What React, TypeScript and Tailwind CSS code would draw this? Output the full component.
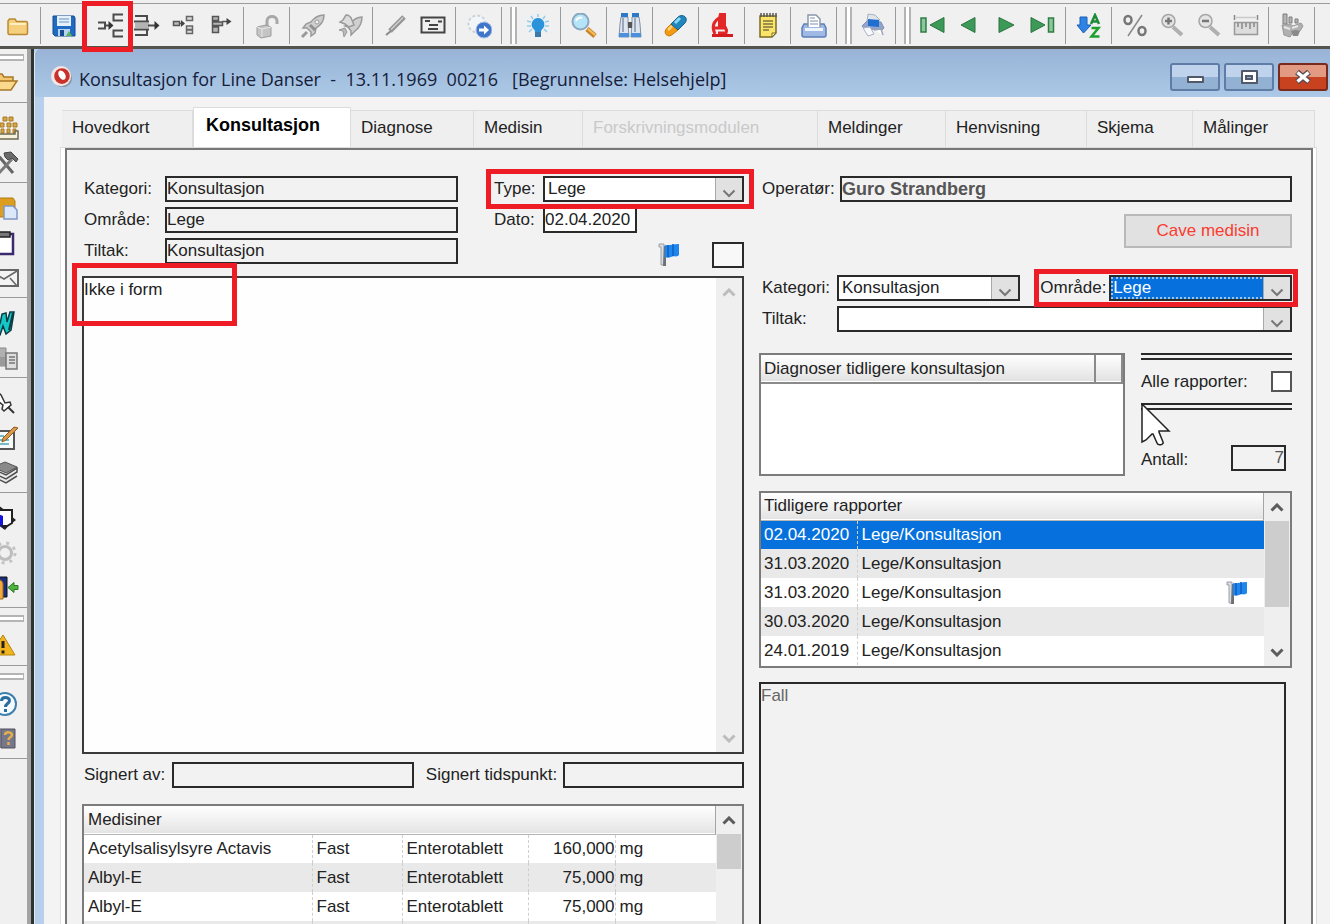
import React from "react";

type IconProps = { className?: string; children: React.ReactNode };

function Svg({ className = "", children }: IconProps) {
  return (
    <svg viewBox="0 0 26 26" className={"block h-[26px] w-[26px] shrink-0 " + className} fill="none" aria-hidden="true">
      {children}
    </svg>
  );
}

const icons: Record<string, React.ReactNode> = {
  folder: (
    <>
      <path d="M4 8l1.500-2H11l1.500 2.500H22c1 0 1.500.5 1.500 1.500v10c0 1-.5 1.500-1.500 1.500H5.500C4.500 21.500 4 21 4 20z" fill="#f6cf7c" stroke="#b98a35" strokeWidth="1.500" />
      <path d="M6 11h16" stroke="#fff0c4" strokeWidth="2" />
    </>
  ),
  save: (
    <>
      <path d="M2 3h21l1 2v18H4l-2-2z" fill="#1f6bc4" stroke="#174a92" />
      <path d="M6 3h14v10H6z" fill="#e6f0fb" />
      <path d="M8 6h10M8 9h10" stroke="#8fb4dd" strokeWidth="1.500" />
      <path d="M7 16h12v7H7z" fill="#b7d3ee" />
      <path d="M9 17h4v6H9z" fill="#174a92" />
      <path d="M18 18l3 5h-6z" fill="#5db35b" />
    </>
  ),
  splitIn: (
    <>
      <path d="M1 9.500h7v6H1M8 12.500h6" stroke="#4b4b4b" strokeWidth="2" />
      <path d="M11.500 8l5 4.500-5 4.500z" fill="#333" />
      <path d="M26 1.500H16.500v6H26M26 17.500H16.500v6H26" stroke="#4b4b4b" strokeWidth="2" />
    </>
  ),
  splitOut: (
    <>
      <path d="M1 3h12v5.500M1 22h12v-5.500M0 8.500h15M0 16.500h15" stroke="#4b4b4b" strokeWidth="2" />
      <path d="M1 10h14v5H1z" fill="#b4b4b4" />
      <path d="M14 12.500h8" stroke="#4b4b4b" strokeWidth="2" />
      <path d="M20.500 8l5 4.500-5 4.500z" fill="#333" />
    </>
  ),
  treeIn: (
    <>
      <path d="M2.500 8.500h6v4h-6zM8 10.500h5" fill="#bbb" stroke="#555" strokeWidth="1.500" />
      <path d="M10 7l4 3.500-4 3.500z" fill="#444" />
      <path d="M15.500 3.500h6v4h-6zM15.500 13h6v3.500h-6zM15.500 17h6v3.500h-6z" fill="#d9d9d9" stroke="#666" strokeWidth="1.500" />
    </>
  ),
  treeOut: (
    <>
      <path d="M4.500 3.500h6v4h-6zM4.500 9h10v3.500h-10zM4.500 14h6v5.500h-6z" fill="#b5b5b5" stroke="#555" strokeWidth="1.500" />
      <path d="M14 8.500h6" stroke="#555" strokeWidth="1.500" />
      <path d="M18.500 5l5 3.500-5 3.500z" fill="#444" />
    </>
  ),
  unlock: (
    <>
      <path d="M13 14V8c0-6 10-6 10 0v3" stroke="#a8a8a8" strokeWidth="3" />
      <path d="M3 14l9-2 5 2v9l-10 2-4-3z" fill="#c4c4c4" stroke="#9d9d9d" />
      <path d="M3 14l5 2v8M8 16l9-2" stroke="#e8e8e8" />
    </>
  ),
  rocket: (
    <>
      <path d="M24 2c-6 0-10 3-13 7l-5 2-3 4 4 0 4 4 0 4 4-3 1-5c5-3 8-7 8-13z" fill="#cfcfcf" stroke="#9a9a9a" strokeWidth="1.500" />
      <path d="M7 19l-5 5" stroke="#9a9a9a" strokeWidth="3" />
      <path d="M10 12l5 5" stroke="#8e8e8e" strokeWidth="3" />
      <circle cx="17" cy="9" r="2" fill="#f4f4f4" stroke="#9a9a9a" />
    </>
  ),
  rockets: (
    <>
      <path d="M25 4c-6 0-9 3-12 7l-5 2 3 1 3 4 0 4 4-4c4-3 7-7 7-14z" fill="#d0d0d0" stroke="#9a9a9a" strokeWidth="1.500" />
      <path d="M9 2c3 0 5 2 6 5l2 5-5 2-4-3-5-2 3-2z" fill="#dcdcdc" stroke="#9a9a9a" strokeWidth="1.500" />
      <path d="M8 15l-6 2 4 1 1 6 3-5z" fill="#bbb" stroke="#9a9a9a" />
    </>
  ),
  pencil: (
    <>
      <path d="M3 22l5-4" stroke="#8a8a8a" strokeWidth="2" />
      <path d="M7 18L21 4" stroke="#949494" strokeWidth="5" />
      <path d="M8 16.500L20 4.500" stroke="#d0d0d0" strokeWidth="1.500" />
    </>
  ),
  card: (
    <>
      <path d="M1.500 4.500h23v15h-23z" fill="#eee" stroke="#444" strokeWidth="2" />
      <path d="M5 8h5M9 12h9M8 16h10M18 8.500h4" stroke="#444" strokeWidth="2" />
    </>
  ),
  globeGo: (
    <>
      <circle cx="11" cy="11" r="8.500" fill="#f3f6f9" stroke="#cdd3d9" strokeWidth="2" strokeDasharray="3 2" />
      <circle cx="18" cy="17" r="8" fill="#3f76cc" stroke="#a9c0e2" />
      <path d="M13 17h6" stroke="#fff" strokeWidth="3" />
      <path d="M18 12.500l5 4.500-5 4.500z" fill="#fff" />
    </>
  ),
  bulb: (
    <>
      <path d="M13 5a6.500 6.500 0 0 0-4 11.500c1 1 1 2 1 3.500h6c0-1.500 0-2.500 1-3.500A6.500 6.500 0 0 0 13 5z" fill="#2b93da" />
      <path d="M10 19h6v5h-6z" fill="#3c78a8" />
      <path d="M13 1v3M6 3l2 3M20 3l-2 3M2 8l4 1M24 8l-4 1M2 13h4M24 13h-4M4 19l3-3M22 19l-3-3" stroke="#8fcdf0" strokeWidth="1.500" />
    </>
  ),
  search: (
    <>
      <path d="M16 16l8 7" stroke="#c9852a" strokeWidth="5" />
      <path d="M17 16l7 6" stroke="#f8c05c" strokeWidth="2" />
      <circle cx="9.500" cy="8.500" r="8" fill="#b5e3f8" stroke="#8ba7bf" strokeWidth="2" />
      <path d="M5 8c1-3 4-4 6-3" stroke="#fff" strokeWidth="2" />
    </>
  ),
  binoculars: (
    <>
      <path d="M4 4h7v7l1 13H2l1-13zM15 4h7l1 7 1 13H14l1-13z" fill="#dfe5ee" stroke="#8291a8" />
      <path d="M4 0h7v4H4zM15 0h7v4h-7z" fill="#2e78c8" />
      <path d="M11 9h4v6h-4z" fill="#555" />
      <path d="M2 20h10v4H2zM14 20h10v4H14z" fill="#4a90dc" />
      <path d="M6 5v14M18 5v14" stroke="#9aa6b8" strokeWidth="2" />
    </>
  ),
  pill: (
    <>
      <path d="M8 11L4 15c-5 5 1 11 6 6l5-4z" fill="#f49a12" stroke="#c67a0e" />
      <path d="M8 11l7-7c5-4 11 1 7 6l-7 7z" fill="#1f87bd" stroke="#1c5f8c" />
      <path d="M12 10l5-5" stroke="#8fd8f5" strokeWidth="3" />
      <path d="M5 17l4-4" stroke="#ffd27a" strokeWidth="2.500" />
    </>
  ),
  microscope: (
    <>
      <path d="M11 1h5v13h-6V5z" fill="#e32626" stroke="#e32626" strokeWidth="2" />
      <path d="M10 5c-6 4-7 10-4 16M5 15h13" stroke="#e32626" strokeWidth="3" />
      <path d="M15 14c3 2 3 4 2 6H9" stroke="#e32626" strokeWidth="3" />
      <path d="M3 21h21v3H3z" fill="#d41d1d" />
    </>
  ),
  notepad: (
    <>
      <path d="M5 3h16v17l-4 4H5z" fill="#fbe46a" stroke="#7a6b22" strokeWidth="1.500" />
      <path d="M6 0v4M9 0v4M12 0v4M15 0v4M18 0v4M21 0v4" stroke="#555" strokeWidth="1.500" />
      <path d="M8 8h10M8 11h10M8 14h10M8 17h6" stroke="#7d7440" strokeWidth="1.500" />
      <path d="M17 24v-4h4z" fill="#fff4b0" stroke="#7a6b22" />
    </>
  ),
  printTray: (
    <>
      <path d="M3 11h20l2 4v7c0 1-1 2-2 2H3c-1 0-2-1-2-2v-7z" fill="#9fb9e4" stroke="#5c7eb8" strokeWidth="1.500" />
      <path d="M7 14V2h8l4 4v8" fill="#fff" stroke="#8a97ad" strokeWidth="1.500" />
      <path d="M9 5h5M9 8h8M9 11h8" stroke="#8090ab" />
      <path d="M4 15h18v3H4z" fill="#eef4fd" />
    </>
  ),
  printer: (
    <>
      <path d="M7 8l1-7 7 1 5 5z" fill="#dfe3ea" stroke="#a9b2bf" />
      <path d="M2 13l5-5 14 1 3 6-4 4-7-3-6 3z" fill="#93a3cc" stroke="#8090b5" />
      <path d="M8 6l11 1v7L8 13z" fill="#1f6fd0" />
      <path d="M3 15l7-1 4 7-6 2z" fill="#f7f9fc" stroke="#aab4c4" />
      <path d="M14 17l7-1 2 6" fill="#fff" stroke="#9aa4b3" strokeWidth="1.500" />
    </>
  ),
  first: (
    <>
      <path d="M2 5h5v14H2z" fill="#8cc79b" stroke="#2f7d46" strokeWidth="1.500" />
      <path d="M25 4.500v15L11 12z" fill="#3d9957" stroke="#2a7540" />
    </>
  ),
  prev: <path d="M19 4.500v15L5 12z" fill="#3d9957" stroke="#2a7540" />,
  next: <path d="M6 4.500v15L21 12z" fill="#3d9957" stroke="#2a7540" />,
  last: (
    <>
      <path d="M1 4.500v15L15 12z" fill="#3d9957" stroke="#2a7540" />
      <path d="M18.500 5h5v14h-5z" fill="#8cc79b" stroke="#2f7d46" strokeWidth="1.500" />
    </>
  ),
  sort: (
    <>
      <path d="M4 4h7v8h4l-7.500 8L1 12h3z" fill="#2e83e6" stroke="#1b5fb4" />
      <path d="M15 11l4-9 4 9M17 8.500h4" stroke="#1f8a3a" strokeWidth="2.500" />
      <path d="M15.500 15h7l-7 8.500h8" stroke="#1fa02d" strokeWidth="2.500" />
    </>
  ),
  percent: (
    <>
      <ellipse cx="6" cy="7" rx="3.500" ry="4" stroke="#777" strokeWidth="2.500" />
      <ellipse cx="20" cy="18" rx="3.500" ry="4" stroke="#777" strokeWidth="2.500" />
      <path d="M20 2L6 23" stroke="#8a8a8a" strokeWidth="1.500" />
    </>
  ),
  zoomIn: (
    <>
      <path d="M14 14l9 8" stroke="#b0b0b0" strokeWidth="4" />
      <circle cx="9.500" cy="8" r="6.500" fill="#e4e4e4" stroke="#a6a6a6" strokeWidth="1.500" />
      <path d="M9.500 4.500v7M6 8h7" stroke="#777" strokeWidth="2.500" />
    </>
  ),
  zoomOut: (
    <>
      <path d="M14 14l9 8" stroke="#b0b0b0" strokeWidth="4" />
      <circle cx="9.500" cy="8" r="6.500" fill="#e4e4e4" stroke="#a6a6a6" strokeWidth="1.500" />
      <path d="M6 8h7" stroke="#777" strokeWidth="2.500" />
    </>
  ),
  ruler: (
    <>
      <path d="M1.500 2v5M24.500 2v5" stroke="#888" strokeWidth="1.500" />
      <path d="M3 4.500h20" stroke="#c9c9c9" strokeWidth="1.500" />
      <path d="M1.500 9.500h23v12h-23z" fill="#ddd" stroke="#999" strokeWidth="1.500" />
      <path d="M5 10v4M9 10v6M13 10v4M17 10v6M21 10v4" stroke="#888" strokeWidth="1.500" />
    </>
  ),
  lab: (
    <>
      <path d="M4 1h4v10H4zM10 4h3v6h-3zM16 6h3v4h-3z" fill="#b5b5b5" stroke="#7d7d7d" />
      <path d="M3 12l8-1 3 2 8-3 2 3-3 5-7 1-3 5-6-2z" fill="#b0b0b0" stroke="#999" />
      <path d="M12 18l5-1 4 1-2 5h-5z" fill="#8a8a8a" />
      <path d="M5 14l6 2M13 15l6-2" stroke="#e6e6e6" strokeWidth="2" />
    </>
  ),
  folderOpen: (
    <>
      <path d="M1 20V4h8l2 3h9v4" fill="#f3c670" stroke="#a87824" strokeWidth="1.500" />
      <path d="M1 20l6-9h17l-6 9z" fill="#fbd98c" stroke="#a87824" strokeWidth="1.500" />
    </>
  ),
  network: (
    <>
      <path d="M10 2h4v4h-4zM16 2h4v4h-4zM7 8h4v4H7zM14 8h4v4h-4zM20 8h4v4h-4zM8 14h3v4H8zM14 14h3v4h-3zM20 14h3v4h-3z" fill="#d8a544" stroke="#a97b25" />
      <path d="M0 19h22v-3h3v8H0z" fill="#f6f2dd" stroke="#6e6a4f" strokeWidth="1.500" />
    </>
  ),
  hammer: (
    <>
      <path d="M4 4l16 19" stroke="#666" strokeWidth="3" />
      <path d="M19 9L6 23" stroke="#7a7a7a" strokeWidth="3" />
      <path d="M11 3l7-1 7 7-2 3-4-4-4 2-3-3z" fill="#6a6a6a" stroke="#444" />
    </>
  ),
  docFolder: (
    <>
      <path d="M-2 3h22l2 3v16H-2z" fill="#dd9d1e" stroke="#b57c10" />
      <path d="M11 11h9l4 4v9H11z" fill="#dce8fa" stroke="#7f97c4" strokeWidth="1.500" />
    </>
  ),
  clipboard: (
    <>
      <path d="M0 4h20v20H0z" fill="#fff" stroke="#3a2a6e" strokeWidth="2.500" />
      <path d="M4 2h13v5H4z" fill="#777" stroke="#222" strokeWidth="1.500" />
    </>
  ),
  envelope: (
    <>
      <path d="M-2 5h27v16H-2z" fill="#f3f3f3" stroke="#666" strokeWidth="2" />
      <path d="M-2 6l13 8 13-8M7 13l-8 8M17 13l7 8" stroke="#666" strokeWidth="1.500" />
    </>
  ),
  word: (
    <>
      <path d="M-1 6l5-2 3 10 2-10 4-1 1 9 3-10 4 0-3 18-5 4-3-8-3 9-5 1z" fill="#14c8c8" stroke="#0b3c44" strokeWidth="1.500" />
      <path d="M20 3l-4 17" stroke="#0b3c44" strokeWidth="2" />
    </>
  ),
  office: (
    <>
      <path d="M3 3h10v18H3z" fill="#b0b0b0" stroke="#8a8a8a" />
      <path d="M0 12h13v9H0z" fill="#9a9a9a" />
      <path d="M13 8h11v16H13z" fill="#dedede" stroke="#777" strokeWidth="1.500" />
      <path d="M16 12h6M16 15h6M16 18h6" stroke="#777" strokeWidth="1.500" />
    </>
  ),
  pin: (
    <>
      <path d="M4 1l4 4 4 8 5-1 1 3-7 6-2-2 1-4-8-6" fill="#fff" stroke="#333" strokeWidth="1.500" />
      <path d="M15 17l6 6" stroke="#333" strokeWidth="2" />
    </>
  ),
  editNote: (
    <>
      <path d="M1 6h20v18H1z" fill="#f7fbfb" stroke="#555" strokeWidth="2" />
      <path d="M4 11h7M4 15h12M4 19h12" stroke="#49a6b4" strokeWidth="1.500" />
      <path d="M10 13L21 2l4 1-12 12-4 2z" fill="#d99a4e" stroke="#8e5a1c" />
    </>
  ),
  books: (
    <>
      <path d="M0 7l12-5 12 5-11 6z" fill="#8a8a8a" stroke="#555" />
      <path d="M0 9l13 6 11-7v4l-11 7-13-6zM1 17l12 6 11-7" fill="#e8e8e8" stroke="#4e4e4e" strokeWidth="1.500" />
    </>
  ),
  door: (
    <>
      <path d="M2 5h17v13l-8 5-7-5" fill="#fff" stroke="#222" strokeWidth="2" />
      <path d="M0 7l10 4v12l-10-6z" fill="#1414e0" />
      <path d="M5 0l6 4.500-6 1zM18 11l5 4-5 4zM7 20h9l-4 5z" fill="#222" />
    </>
  ),
  gear: (
    <>
      <circle cx="12" cy="13" r="6.500" stroke="#bdbdbd" strokeWidth="3" />
      <circle cx="12" cy="13" r="10" stroke="#c4c4c4" strokeWidth="3" strokeDasharray="3 5" />
    </>
  ),
  exit: (
    <>
      <path d="M-2 2h16v20H-2z" fill="#1a2c7c" stroke="#111" />
      <path d="M-2 6c7-3 12-1 12 3v15H-2z" fill="#f2ab3a" stroke="#9c661a" />
      <path d="M6 8v14" stroke="#fce0a8" strokeWidth="2" />
      <path d="M15 12.500l6-5v3h4v4h-4v3z" fill="#4eb23e" stroke="#2d7a25" />
    </>
  ),
  warning: (
    <>
      <path d="M10 2l12 20H-3z" fill="#f2b51d" stroke="#b58410" />
      <path d="M10 8v7M10 17.500v3" stroke="#222" strokeWidth="3" />
    </>
  ),
  help: (
    <>
      <circle cx="12" cy="13" r="11" fill="#f5fafe" stroke="#3d7fae" strokeWidth="2" />
      <path d="M8.500 10c0-5 8-4.500 8-.5 0 3-4 3-4 6.500M12.500 18v3" stroke="#2a6c9e" strokeWidth="3" />
    </>
  ),
  helpBook: (
    <>
      <path d="M0 5l7-3v20l-7 2zM8 3h14v19H8z" fill="#77778c" stroke="#50505f" />
      <path d="M12 9c0-4 7-3 7 0 0 2-3.500 2-3.500 5M15.500 16v3" stroke="#e3b04a" strokeWidth="2.500" />
    </>
  ),
  flag: (
    <>
      <path d="M3 2h5v21H5V5H3z" fill="#d9dcdf" stroke="#9aa0a6" />
      <path d="M8 4h2v20H7z" fill="#6b7177" />
      <path d="M9 3c4 1 7-1 14-1v11c-3 3-5 0-8 2-2 1-4 1-6 0z" fill="#1f86ee" />
      <path d="M12 3v12M17 2v12" stroke="#0f5fc0" strokeWidth="1.500" />
    </>
  ),
};

function IconButton({ name, label, marked }: { name: string; label: string; marked?: boolean }) {
  return (
    <button type="button" aria-label={label} className="relative block shrink-0">
      <Svg>{icons[name]}</Svg>
      {marked && <span className="pointer-events-none absolute -top-3 -right-[10px] -bottom-[13px] -left-[15px] z-20 border-[5px] border-[#ee1c25]" />}
    </button>
  );
}

type Tool = [string, string];

const toolGroups: (Tool[] | "grip")[] = [
  [["save", "Lagre"]],
  [["splitIn", "Flett inn"], ["splitOut", "Flett ut"], ["treeIn", "Legg til"], ["treeOut", "Trekk fra"]],
  [["unlock", "Lås opp"]],
  [["rocket", "Send"], ["rockets", "Send alle"]],
  [["pencil", "Rediger"], ["card", "Kort"]],
  [["globeGo", "Gå til"]],
  "grip",
  [["bulb", "Tips"]],
  [["search", "Søk"]],
  [["binoculars", "Finn"]],
  [["pill", "Medisin"]],
  [["microscope", "Laboratorium"]],
  [["notepad", "Notat"]],
  [["printTray", "Skriv ut"]],
  "grip",
  [["printer", "Skriver"]],
  "grip",
  [["first", "Første"], ["prev", "Forrige"], ["next", "Neste"], ["last", "Siste"]],
  [["sort", "Sorter"]],
  [["percent", "Prosent"], ["zoomIn", "Zoom inn"], ["zoomOut", "Zoom ut"], ["ruler", "Linjal"]],
  [["lab", "Prøver"]],
];

function Toolbar() {
  return (
    <header className="flex h-[49px] shrink-0 flex-col border-b-[3px] border-[#55534e] bg-[#f0f0f0] pt-[3px]">
      <div className="flex flex-1 items-stretch border-t border-[#9c9c9c] pt-[3px] pb-[2px]">
        <div className="flex items-center border-r border-[#9a9a9a] pr-[10px] pl-1">
          <IconButton name="folder" label="Mappe" />
        </div>
        {toolGroups.map((group, i) =>
          group === "grip" ? (
            <div key={i} className="ml-2 w-[7px] border-x-2 border-[#b4b4b4] bg-white" />
          ) : (
            <div
              key={i}
              className={"flex items-center gap-[11px] border-r border-[#9a9a9a] pr-[9px] " + (toolGroups[i - 1] === "grip" ? "pl-2" : "pl-[10px]")}
            >
              {group.map(([name, label]) => (
                <IconButton key={name} name={name} label={label} marked={name === "splitIn"} />
              ))}
            </div>
          ),
        )}
      </div>
    </header>
  );
}

const sideSections: (Tool[] | "grip")[] = [
  "grip",
  [["folderOpen", "Åpne"]],
  [["network", "Oversikt"], ["hammer", "Verktøy"]],
  [["docFolder", "Dokumenter"], ["clipboard", "Utklipp"], ["envelope", "Post"]],
  [["word", "Tekst"], ["office", "Kontor"]],
  [["pin", "Fest"], ["editNote", "Skriv notat"], ["books", "Bøker"]],
  [["door", "Inngang"], ["gear", "Innstillinger"], ["exit", "Avslutt"]],
  "grip",
  [["warning", "Varsel"]],
  "grip",
  [["help", "Hjelp"], ["helpBook", "Håndbok"]],
];

function Sidebar() {
  return (
    <nav aria-label="Verktøy" className="w-[31px] shrink-0 overflow-hidden border-r-[4px] border-[#a3a3a1] bg-[#f0f0f0]">
      {sideSections.map((section, i) =>
        section === "grip" ? (
          <div key={i} className={"flex items-center pr-[3px] " + (i === 0 ? "h-4" : "h-5")}>
            <div className="h-[7px] w-full border-y-2 border-r border-[#b4b4b4] bg-white" />
          </div>
        ) : (
          <div
            key={i}
            className={"flex flex-col border-b border-[#9a9a9a] pb-[2px] " + (sideSections[i - 1] === "grip" ? "" : "pt-[7px]")}
          >
            {section.map(([name, label]) => (
              <button key={name} type="button" aria-label={label} className="flex h-[35px] items-center justify-end pr-2">
                <Svg>{icons[name]}</Svg>
              </button>
            ))}
          </div>
        ),
      )}
    </nav>
  );
}

function TitleBar() {
  const frame = "flex h-7 w-[50px] items-center justify-center rounded-[3px] border-2";
  return (
    <div className="flex h-12 shrink-0 items-center bg-linear-to-b from-[#98b3d6] to-[#acc9e7] pt-2 pr-[2px] pl-4">
      <svg viewBox="0 0 24 24" className="mr-[6px] h-[22px] w-[22px]" aria-hidden="true">
        <circle cx="13" cy="13" r="10" fill="#8b95a5" />
        <circle cx="11" cy="11" r="11" fill="#f3e6e4" />
        <circle cx="12" cy="11" r="8.500" fill="#c8322b" />
        <ellipse cx="12" cy="10" rx="3.500" ry="5.500" fill="#fff" transform="rotate(-30 12 10)" />
      </svg>
      <h1 className="flex-1 pt-1 font-['Open_Sans','Noto_Sans',sans-serif] text-[18px] whitespace-pre text-[#14203a]">
        Konsultasjon for Line Danser  -  13.11.1969  00216   [Begrunnelse: Helsehjelp]
      </h1>
      <div className="flex gap-1">
        <button type="button" aria-label="Minimer" className={frame + " border-[#5f7ca6] bg-linear-to-b from-[#bfd4ec] from-50% to-[#93b1d3] to-50%"}>
          <span className="mt-1 h-[7px] w-[17px] rounded-[1px] border-2 border-[#50586a] bg-white" />
        </button>
        <button type="button" aria-label="Maksimer" className={frame + " border-[#5f7ca6] bg-linear-to-b from-[#bfd4ec] from-50% to-[#93b1d3] to-50%"}>
          <span className="flex h-[14px] w-[17px] items-center justify-center rounded-[1px] border-2 border-[#50586a] bg-white">
            <span className="h-[5px] w-2 border-2 border-[#50586a] bg-[#93b1d3]" />
          </span>
        </button>
        <button type="button" aria-label="Lukk" className={frame + " border-[#7a2a1c] bg-linear-to-b from-[#e39a82] from-50% to-[#c9421f] to-50%"}>
          <svg viewBox="0 0 18 14" className="h-[14px] w-[18px]" aria-hidden="true">
            <path d="M3 2l12 10M15 2L3 12" stroke="#5b4b52" strokeWidth="6" />
            <path d="M3.500 2.500l11 9M14.500 2.500l-11 9" stroke="#fff" strokeWidth="3.500" />
          </svg>
        </button>
      </div>
    </div>
  );
}

const tabs = ["Hovedkort", "Konsultasjon", "Diagnose", "Medisin", "Forskrivningsmodulen", "Meldinger", "Henvisning", "Skjema", "Målinger"];

function Tabs() {
  return (
    <div role="tablist" className="mr-[15px] ml-[18px] grid h-[40px] shrink-0 grid-cols-[131fr_158fr_123fr_109fr_235fr_128fr_141fr_106fr_122fr] items-end">
      {tabs.map((tab) => {
        if (tab === "Konsultasjon")
          return (
            <button key={tab} type="button" role="tab" aria-selected="true" className="flex h-full items-center border border-b-0 border-[#dcdcdc] bg-white pb-[6px] pl-3 text-[18px] font-bold text-black">
              {tab}
            </button>
          );
        const off = tab === "Forskrivningsmodulen";
        return (
          <button
            key={tab}
            type="button"
            role="tab"
            aria-selected="false"
            disabled={off}
            className={"flex h-[37px] items-center border-t border-r border-[#dcdcdc] bg-[#efefef] pb-[2px] pl-[10px] " + (off ? "text-[#c9c9c9]" : "")}
          >
            {tab}
          </button>
        );
      })}
    </div>
  );
}

const box = "h-[26px] min-w-0 rounded-none border-2 border-[#2a2a2a] outline-none";

function Chevron({ up, bold }: { up?: boolean; bold?: boolean }) {
  return (
    <svg viewBox="0 0 14 9" className="h-[9px] w-[14px]" fill="none" aria-hidden="true">
      <path d={up ? "M1.500 7.500L7 2l5.500 5.500" : "M1.500 1.500L7 7l5.500-5.500"} stroke="currentColor" strokeWidth={bold ? 3 : 2} />
    </svg>
  );
}

function Select({ id, value, focused, className = "" }: { id: string; value: string; focused?: boolean; className?: string }) {
  return (
    <div className={box + " relative flex bg-white " + className}>
      <select
        id={id}
        defaultValue={value}
        className={
          "h-full w-full appearance-none pr-7 outline-none " +
          (focused ? "border-2 border-dotted border-[#9fc6f0] bg-[#0671dc] leading-[18px] text-white" : "pl-[3px] leading-[22px]")
        }
      >
        <option>{value}</option>
      </select>
      <span className="pointer-events-none absolute inset-y-0 right-0 flex w-[27px] items-end justify-center border-l border-[#a8a8a8] bg-[#e1e1e1] pb-[2px] text-[#777]">
        <Chevron />
      </span>
    </div>
  );
}

function ScrollBar({ thumb, faint, down = true }: { thumb?: string; faint?: boolean; down?: boolean }) {
  return (
    <div aria-hidden="true" className={"flex w-[26px] shrink-0 flex-col items-center bg-[#efefef] " + (faint ? "text-[#bdbdbd]" : "text-[#5c5c5c]")}>
      <span className="flex h-7 items-center">
        <Chevron up bold />
      </span>
      <span className={"w-6 " + (thumb ?? "")} />
      {down && (
        <span className="mt-auto flex h-7 items-center">
          <Chevron bold />
        </span>
      )}
    </div>
  );
}

function LeftColumn() {
  const fields = [
    ["kategori", "Kategori:", "Konsultasjon"],
    ["omrade", "Område:", "Lege"],
    ["tiltak", "Tiltak:", "Konsultasjon"],
  ];
  const medicines = [
    ["Acetylsalisylsyre Actavis", "Fast", "Enterotablett", "160,000", "mg"],
    ["Albyl-E", "Fast", "Enterotablett", "75,000", "mg"],
    ["Albyl-E", "Fast", "Enterotablett", "75,000", "mg"],
    ["", "", "", "", ""],
  ];
  const dash = "border-l border-dashed border-[#cfcfcf] pl-1";
  return (
    <section className="flex min-h-0 min-w-0 flex-col">
      <div className="flex justify-between">
        <div className="flex w-[376px] flex-col gap-[5px]">
          {fields.map(([id, label, value]) => (
            <div key={id} className="flex items-center">
              <label htmlFor={id} className="w-[83px] pl-[2px]">{label}</label>
              <input id={id} readOnly defaultValue={value} className={box + " flex-1 bg-[#f2f2f2]"} />
            </div>
          ))}
        </div>
        <div className="flex w-[250px] flex-col gap-[5px]">
          <div className="relative z-10 flex items-center">
            <label htmlFor="type" className="w-[49px]">Type:</label>
            <Select id="type" value="Lege" className="flex-1" />
            <span className="pointer-events-none absolute -top-[7px] -right-[10px] -bottom-[7px] -left-2 border-[5px] border-[#ee1c25]" />
          </div>
          <div className="flex items-center">
            <label htmlFor="dato" className="w-[49px]">Dato:</label>
            <input id="dato" defaultValue="02.04.2020" className={box + " w-[94px] bg-white"} />
          </div>
          <div className="flex items-center justify-end gap-[30px] pt-1">
            <Svg>{icons.flag}</Svg>
            <input type="checkbox" aria-label="Flagg" className="h-[26px] w-8 appearance-none border-2 border-[#2a2a2a] bg-[#f8f8f8]" />
          </div>
        </div>
      </div>
      <div className="relative mt-2 flex h-[478px] shrink-0 border-2 border-[#3a3a3a] bg-[#fefefe]">
        <textarea aria-label="Notat" defaultValue="Ikke i form" className="min-w-0 flex-1 resize-none leading-6 outline-none" />
        <ScrollBar faint />
        <span className="pointer-events-none absolute -top-[15px] -left-3 h-[63px] w-[165px] border-[5px] border-[#ee1c25]" />
      </div>
      <div className="mt-2 flex items-center">
        <label htmlFor="signert" className="w-[90px] pl-[2px]">Signert av:</label>
        <input id="signert" readOnly className={box + " flex-[243] bg-[#f2f2f2]"} />
        <label htmlFor="tid" className="w-[149px] pl-3">Signert tidspunkt:</label>
        <input id="tid" readOnly className={box + " flex-[181] bg-[#f2f2f2]"} />
      </div>
      <div className="mt-4 flex min-h-0 flex-1 overflow-hidden border-2 border-b-0 border-[#7c7c7c] bg-white">
        <table className="h-fit flex-1 table-fixed border-collapse">
          <colgroup>
            <col className="w-[228px]" />
            <col className="w-[90px]" />
            <col className="w-[126px]" />
            <col className="w-[87px]" />
            <col />
          </colgroup>
          <thead>
            <tr className="h-[28px] border-b border-[#b5b5b5] bg-linear-to-b from-white to-[#e4e4e4]">
              <th colSpan={5} className="border-r border-[#a5a5a5] pl-1 text-left font-normal">Medisiner</th>
            </tr>
          </thead>
          <tbody>
            {medicines.map((m, i) => (
              <tr key={i} className={"h-[29px] " + (i % 2 ? "bg-[#e9e9e9]" : "bg-white")}>
                <td className="pl-1">{m[0]}</td>
                <td className={dash}>{m[1]}</td>
                <td className={dash}>{m[2]}</td>
                <td className={"text-right " + dash}>{m[3]}</td>
                <td className={dash}>{m[4]}</td>
              </tr>
            ))}
          </tbody>
        </table>
        <ScrollBar thumb="h-[35px] bg-[#cdcdcd]" down={false} />
      </div>
    </section>
  );
}

function RightColumn() {
  const reports = [
    ["02.04.2020", false],
    ["31.03.2020", false],
    ["31.03.2020", true],
    ["30.03.2020", false],
    ["24.01.2019", false],
  ] as const;
  return (
    <section className="flex min-h-0 min-w-0 flex-col">
      <div className="flex items-center">
        <label htmlFor="operator" className="w-[81px] pl-[3px]">Operatør:</label>
        <input id="operator" readOnly defaultValue="Guro Strandberg" className={box + " flex-1 bg-[#f2f2f2] text-[18px] font-bold text-[#555]"} />
      </div>
      <button type="button" className="mt-3 h-[34px] w-[168px] self-end border-2 border-[#b9b9b9] bg-[#e1e1e1] text-[#fb3b30]">
        Cave medisin
      </button>
      <div className="mt-[27px] flex items-center">
        <label htmlFor="kat2" className="w-[78px] shrink-0 pl-[3px]">Kategori:</label>
        <Select id="kat2" value="Konsultasjon" className="mr-5 flex-[181]" />
        <div className="relative z-10 flex min-w-0 flex-[254] items-center">
          <label htmlFor="omr2" className="w-[69px] shrink-0">Område:</label>
          <Select id="omr2" value="Lege" focused className="flex-1" />
          <span className="pointer-events-none absolute -inset-[6px] border-[5px] border-[#ee1c25]" />
        </div>
      </div>
      <div className="mt-[5px] flex items-center">
        <label htmlFor="til2" className="w-[78px] shrink-0 pl-[3px]">Tiltak:</label>
        <Select id="til2" value="" className="flex-1" />
      </div>
      <div className="mt-[21px] flex h-[123px] shrink-0 gap-4">
        <div className="flex-1 border-2 border-[#7c7c7c] bg-white">
          <table className="w-full border-collapse">
            <thead>
              <tr className="h-[28px] border-b-2 border-[#8a8a8a] bg-linear-to-b from-white to-[#e2e2e2]">
                <th className="border-r-2 border-[#8a8a8a] pl-[3px] text-left font-normal">Diagnoser tidligere konsultasjon</th>
                <th className="w-[27px] border-r-2 border-[#8a8a8a]" />
              </tr>
            </thead>
          </table>
        </div>
        <div className="relative w-[151px]">
          <div className="h-[7px] border-y-2 border-[#2a2a2a]" />
          <div className="flex h-[43px] items-center justify-between">
            <label htmlFor="alle">Alle rapporter:</label>
            <input id="alle" type="checkbox" className="h-[21px] w-[21px] appearance-none border-2 border-[#555] bg-white" />
          </div>
          <div className="h-[7px] border-y-2 border-[#2a2a2a]" />
          <div className="mt-[34px] flex items-center justify-between pr-[6px]">
            <label htmlFor="antall" className="pt-1">Antall:</label>
            <input id="antall" readOnly defaultValue="7" className={box + " w-[55px] bg-[#f2f2f2] text-right text-[#555]"} />
          </div>
          <svg viewBox="0 0 30 46" className="absolute top-[50px] left-0 h-[46px] w-[30px]" aria-hidden="true">
            <path d="M1 1v38l4-2 6-6h1l4 9c1 3 7 2 6-1l-4-10v-1h10z" fill="#fff" stroke="#222" strokeWidth="1.500" />
          </svg>
        </div>
      </div>
      <div className="mt-[15px] flex h-[177px] shrink-0 border-2 border-[#7c7c7c] bg-white">
        <table className="h-fit flex-1 border-collapse">
          <thead>
            <tr className="h-[27px] border-b border-[#b5b5b5] bg-linear-to-b from-white to-[#e4e4e4]">
              <th colSpan={3} className="border-r border-[#a5a5a5] pl-[3px] text-left font-normal">Tidligere rapporter</th>
            </tr>
          </thead>
          <tbody>
            {reports.map(([date, flagged], i) => (
              <tr key={i} className={"h-[29px] " + (i === 0 ? "bg-[#0671dc] text-white" : i % 2 ? "bg-[#e9e9e9]" : "bg-white")}>
                <td className="w-[96px] pl-[3px]">{date}</td>
                <td className="border-l border-dashed border-[#cfcfcf] pl-1">Lege/Konsultasjon</td>
                <td className="w-[40px]">{flagged && <Svg>{icons.flag}</Svg>}</td>
              </tr>
            ))}
          </tbody>
        </table>
        <ScrollBar thumb="h-[86px] bg-[#cdcdcd]" />
      </div>
      <textarea
        aria-label="Rapport"
        readOnly
        defaultValue="Fall"
        className="mt-[14px] mr-[6px] min-h-0 flex-1 resize-none border-2 border-b-0 border-[#2a2a2a] bg-[#f2f2f2] leading-6 text-[#666] outline-none"
      />
    </section>
  );
}

export default function App() {
  return (
    <div className="flex h-screen flex-col overflow-hidden bg-[#f0f0f0] font-['Liberation_Sans',Arial,sans-serif] text-[17px] leading-6 text-[#222]">
      <Toolbar />
      <div className="flex min-h-0 flex-1">
        <Sidebar />
        <div className="flex min-w-0 flex-1 border-l-[3px] border-[#2c352f] bg-[#b7cfeb]">
          <main className="flex min-w-0 flex-1 flex-col overflow-hidden rounded-tl-md border-l border-[#dfe9f5]">
            <TitleBar />
            <div className="ml-[9px] flex min-h-0 flex-1 flex-col bg-[#f3f3f3] pt-[10px]">
              <Tabs />
              <div className="mr-[13px] ml-4 flex min-h-0 flex-1 border border-b-0 border-[#dcdcdc] bg-white pr-[3px] pl-1">
                <div className="grid min-h-0 flex-1 grid-cols-[662fr_533fr] gap-[15px] border-2 border-b-0 border-[#777] bg-[#f2f2f2] pt-[26px] pr-[19px] pl-[15px]">
                  <LeftColumn />
                  <RightColumn />
                </div>
              </div>
            </div>
          </main>
        </div>
      </div>
    </div>
  );
}
